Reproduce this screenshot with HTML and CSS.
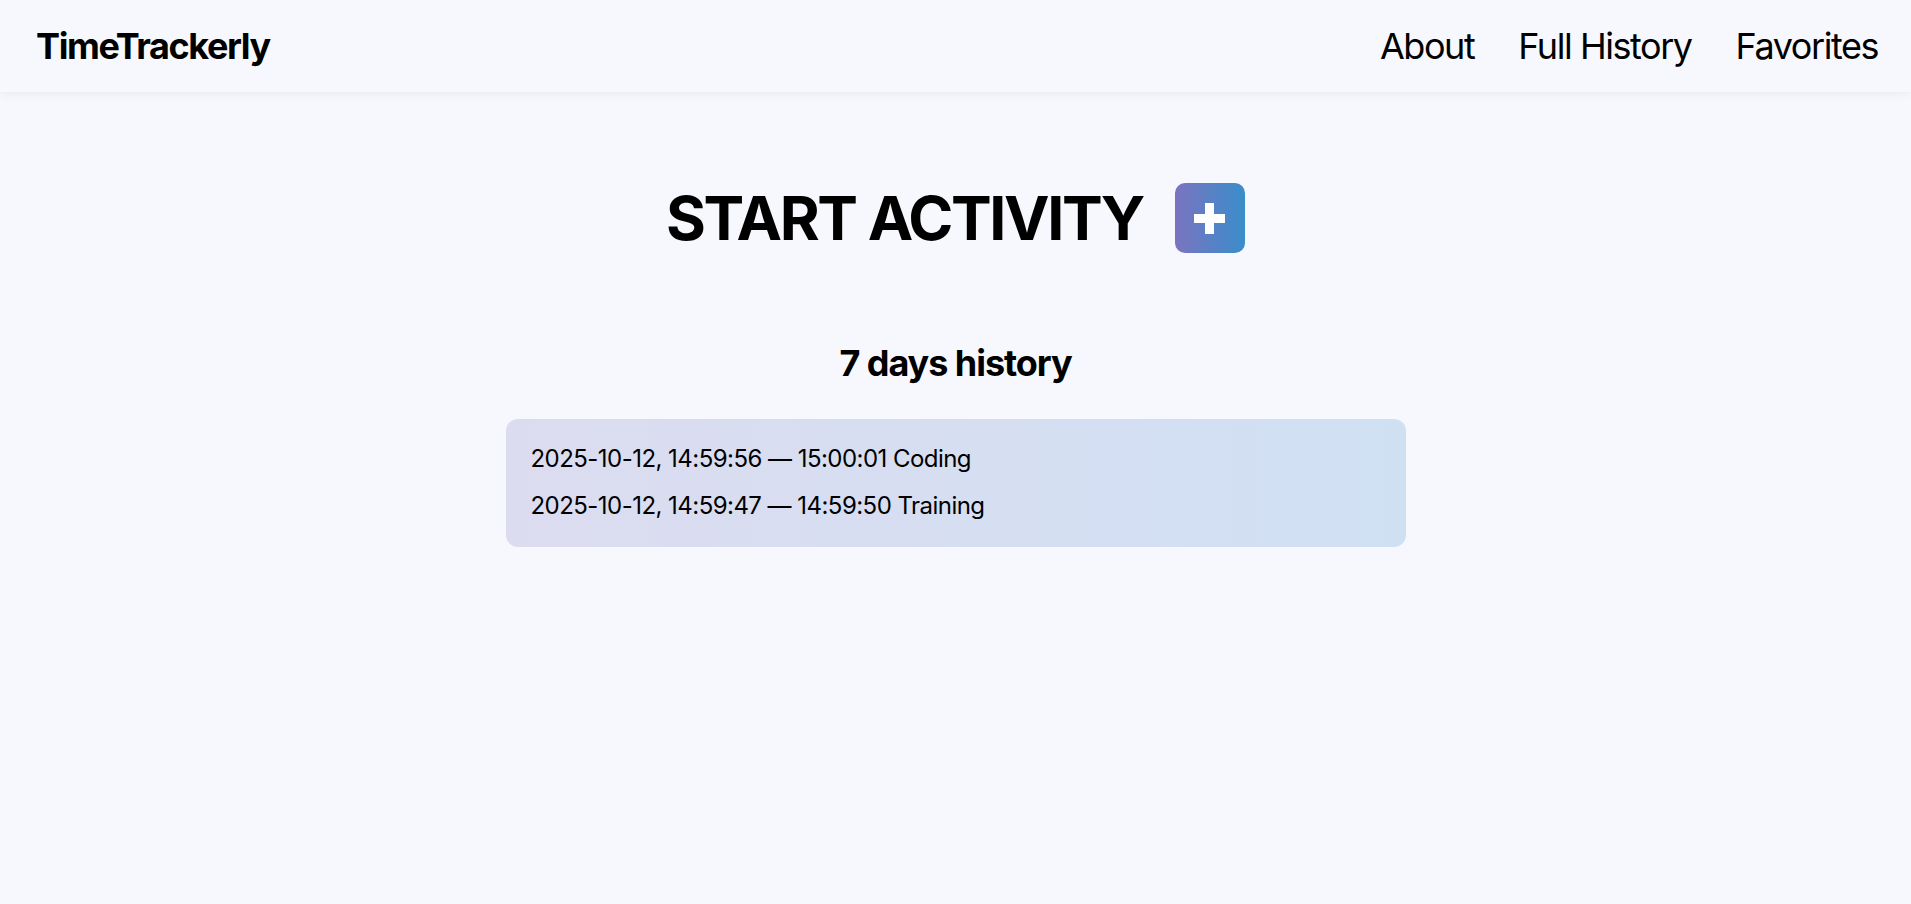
FILE: index.html
```html
<!DOCTYPE html>
<html lang="en">
<head>
<meta charset="utf-8">
<title>TimeTrackerly</title>
<link rel="stylesheet" href="styles.css">
</head>
<body>
<header class="topbar">
  <div class="logo">TimeTrackerly</div>
  <nav class="nav">
    <a href="#" class="nav-link">About</a>
    <a href="#" class="nav-link">Full History</a>
    <a href="#" class="nav-link">Favorites</a>
  </nav>
</header>
<main class="main">
  <section class="start">
    <h1 class="start-title">START ACTIVITY</h1>
    <button class="add-btn" type="button" aria-label="Add activity">
      <svg width="31" height="31" viewBox="0 0 31 31" aria-hidden="true"><rect x="11" y="0" width="9" height="31" fill="#fff"/><rect x="0" y="11" width="31" height="9" fill="#fff"/></svg>
    </button>
  </section>
  <section class="history">
    <h2 class="history-title">7 days history</h2>
    <div class="history-box">
      <div class="history-item">2025-10-12, 14:59:56 — 15:00:01 Coding</div>
      <div class="history-item">2025-10-12, 14:59:47 — 14:59:50 Training</div>
    </div>
  </section>
</main>
</body>
</html>
```

FILE: styles.css
```css
* { box-sizing: border-box; }
html, body { margin: 0; padding: 0; }
body {
  background: #f7f8fd;
  font-family: Inter, "Noto Sans", sans-serif;
  color: #000;
  min-height: 904px;
}
.topbar {
  height: 92px;
  display: flex;
  align-items: center;
  justify-content: space-between;
  padding: 0 33px 0 36px;
  background: #f7f8fd;
  box-shadow: 0 2px 10px rgba(0, 0, 0, 0.06);
}
.logo {
  font-size: 36px;
  font-weight: 700;
  letter-spacing: -1.4px;
}
.nav {
  display: flex;
  gap: 44px;
}
.nav-link {
  font-size: 36px;
  letter-spacing: -1.45px;
  color: #000;
  text-decoration: none;
}
.main {
  display: flex;
  flex-direction: column;
  align-items: center;
  padding-top: 89px;
}
.start {
  display: flex;
  align-items: center;
  gap: 32px;
}
.start-title {
  margin: 0;
  font-size: 61px;
  font-weight: 700;
  letter-spacing: -2.4px;
}
.add-btn {
  width: 70px;
  height: 70px;
  border: none;
  border-radius: 10px;
  background: linear-gradient(90deg, #7a74bf, #3a8dcb);
  display: flex;
  align-items: center;
  justify-content: center;
  padding: 0;
  cursor: pointer;
}
.history {
  display: flex;
  flex-direction: column;
  align-items: center;
  margin-top: 86px;
}
.history-title {
  margin: 0 0 34px;
  font-size: 36px;
  font-weight: 700;
  letter-spacing: -1.05px;
}
.history-box {
  width: 900px;
  padding: 25px 25px 27px;
  border-radius: 12px;
  background: linear-gradient(90deg, #dcdcf0, #d0e0f3);
  display: flex;
  flex-direction: column;
  gap: 18px;
}
.history-item {
  font-size: 24px;
  letter-spacing: -0.54px;
}
```
